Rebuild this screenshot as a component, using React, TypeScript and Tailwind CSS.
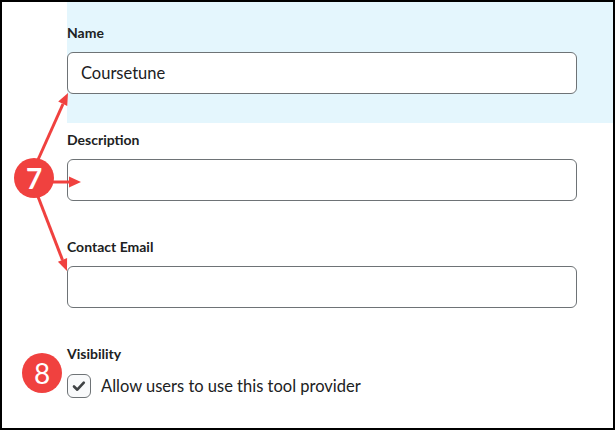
import React from "react";

type FieldProps = {
  label: string;
  value?: string;
};

function Field({ label, value }: FieldProps) {
  return (
    <div>
      <div className="text-sm font-bold leading-5">{label}</div>
      <div className="mt-[9px] flex h-[42px] w-[510px] items-center rounded-md border border-[#6e7376] bg-white px-[13px] text-[16.5px]">
        {value}
      </div>
    </div>
  );
}

function Badge({ n, className }: { n: string; className: string }) {
  return (
    <div
      className={`absolute flex h-[40px] w-[40px] items-center justify-center rounded-full bg-[#f0413f] text-[28px] leading-none text-white ${className}`}
    >
      {n}
    </div>
  );
}

export default function App() {
  return (
    <div className="relative h-[430px] w-[615px] border-2 border-black bg-white font-['Lato',sans-serif] text-[#202122]">
      {/* Highlighted name field */}
      <div className="ml-[65px] bg-[#e4f6fd] pb-[29px] pt-[21px]">
        <Field label="Name" value="Coursetune" />
      </div>

      <div className="ml-[65px] pt-[7px]">
        <Field label="Description" />
        <div className="mt-[36px]">
          <Field label="Contact Email" />
        </div>

        {/* Visibility */}
        <div className="mt-[36px]">
          <div className="text-sm font-bold leading-5">Visibility</div>
          <label className="mt-[10px] flex items-center gap-[10px]">
            <span className="flex h-[24px] w-[24px] items-center justify-center rounded-md border border-[#6e7376] bg-[#f9fafb]">
              <svg width="16" height="16" viewBox="0 0 16 16" fill="none">
                <path
                  d="M3 8.5l3.3 3.2 6.5-7"
                  stroke="#3f4244"
                  strokeWidth="2.6"
                  strokeLinecap="round"
                  strokeLinejoin="round"
                />
              </svg>
            </span>
            <span className="text-[16.5px] leading-6">
              Allow users to use this tool provider
            </span>
          </label>
        </div>
      </div>

      {/* Annotation arrows */}
      <svg
        className="pointer-events-none absolute left-[-2px] top-[-2px]"
        width="615"
        height="430"
        viewBox="0 0 615 430"
      >
        <g stroke="#f0413f" strokeWidth="3" fill="none">
          <line x1="37" y1="162" x2="63" y2="104" />
          <line x1="50" y1="182" x2="70" y2="182" />
          <line x1="37" y1="194" x2="62.5" y2="260" />
        </g>
        <g fill="#f0413f">
          <polygon points="68,93 67.2,106 58.2,101.6" />
          <polygon points="81,182 69,176.5 69,187.5" />
          <polygon points="67,271 67.1,258 57.9,261.8" />
        </g>
      </svg>

      <Badge n="7" className="left-[12px] top-[156px] font-bold" />
      <Badge n="8" className="left-[20px] top-[351px]" />
    </div>
  );
}
